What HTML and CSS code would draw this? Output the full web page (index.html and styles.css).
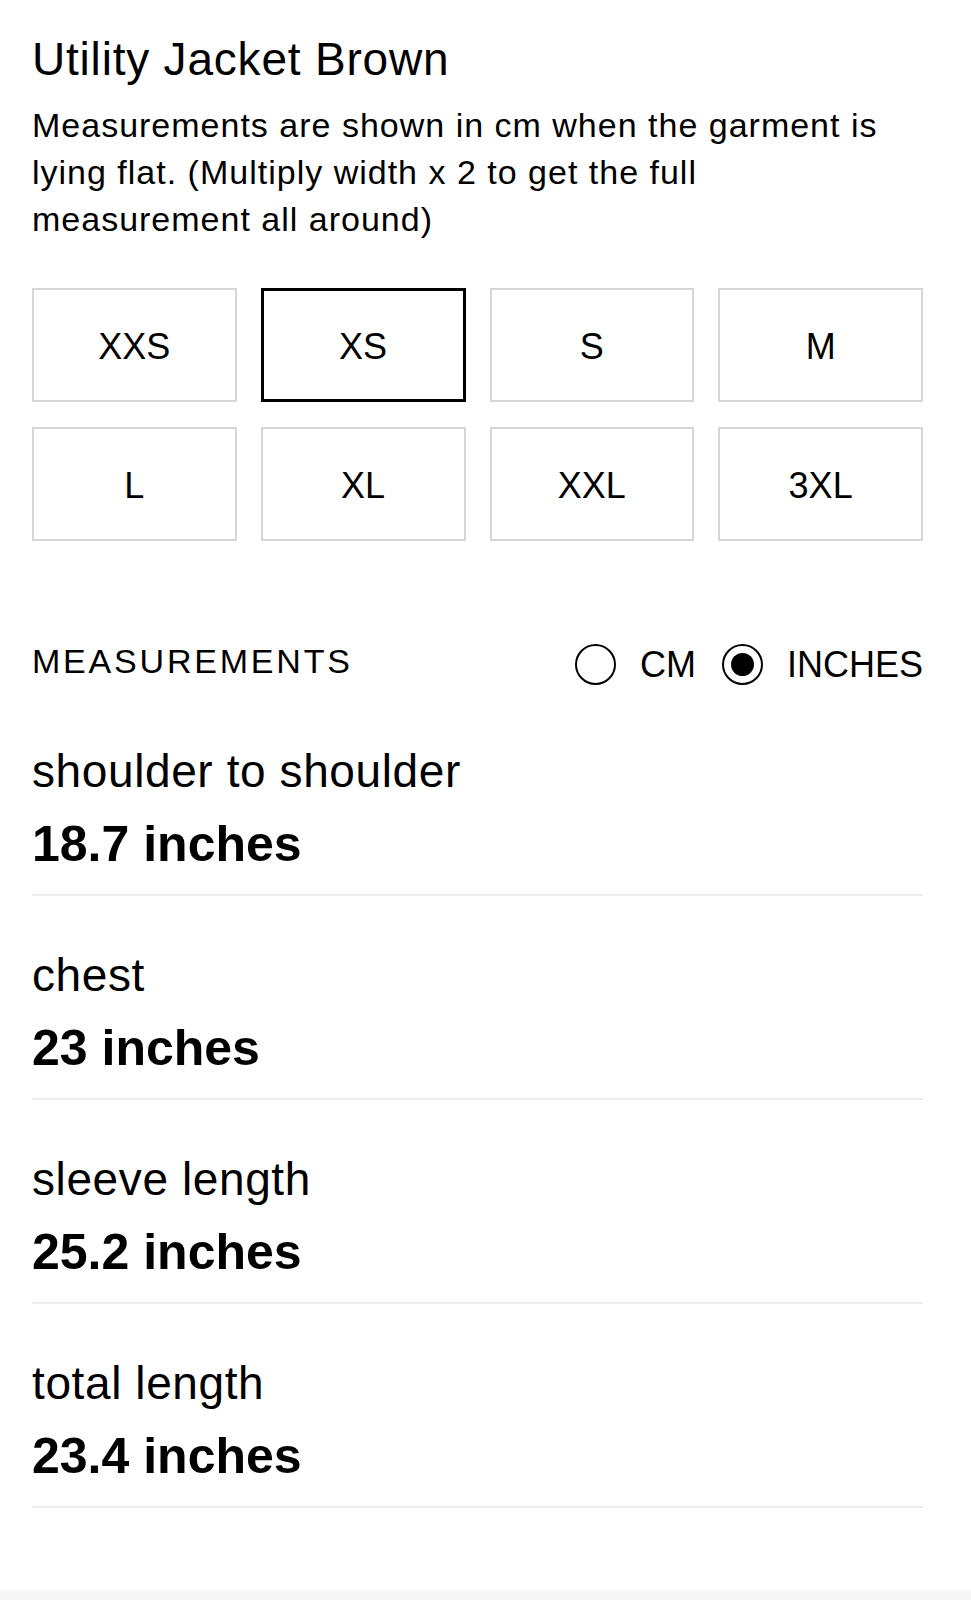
FILE: index.html
```html
<!DOCTYPE html>
<html lang="en">
<head>
    <meta charset="UTF-8">
    <meta name="viewport" content="width=device-width, initial-scale=1.0">
    <title>Size Guide - Utility Jacket Brown</title>
    <link rel="stylesheet" href="styles.css">
</head>
<body>
    <main class="size-guide">
        <h1 class="product-title">Utility Jacket Brown</h1>
        <p class="intro">
            Measurements are shown in cm when the garment is lying flat. (Multiply width x 2 to get the full measurement all around)
        </p>

        <div class="size-grid">
            <button class="size-option">XXS</button>
            <button class="size-option selected">XS</button>
            <button class="size-option">S</button>
            <button class="size-option">M</button>
            <button class="size-option">L</button>
            <button class="size-option">XL</button>
            <button class="size-option">XXL</button>
            <button class="size-option">3XL</button>
        </div>

        <div class="measure-head">
            <h2>MEASUREMENTS</h2>
            <div class="units">
                <label class="unit"><span class="radio"></span>CM</label>
                <label class="unit"><span class="radio checked"></span>INCHES</label>
            </div>
        </div>

        <ul class="measure-list">
            <li class="measure-item">
                <div class="measure-label">shoulder to shoulder</div>
                <div class="measure-value">18.7 inches</div>
            </li>
            <li class="measure-item">
                <div class="measure-label">chest</div>
                <div class="measure-value">23 inches</div>
            </li>
            <li class="measure-item">
                <div class="measure-label">sleeve length</div>
                <div class="measure-value">25.2 inches</div>
            </li>
            <li class="measure-item">
                <div class="measure-label">total length</div>
                <div class="measure-value">23.4 inches</div>
            </li>
        </ul>
    </main>
    <div class="sheet-end"></div>
</body>
</html>
```

FILE: styles.css
```css
body {
    margin: 0;
    font-family: 'Liberation Sans', Arial, sans-serif;
    background-color: #fff;
    color: #000;
}
.size-guide {
    padding: 31px 48px 0 32px;
}
.product-title {
    margin: 0;
    font-size: 46px;
    font-weight: normal;
    line-height: 56px;
    letter-spacing: 0.8px;
}
.intro {
    margin: 15px 0 0;
    max-width: 870px;
    font-size: 34px;
    line-height: 47px;
    letter-spacing: 1px;
}
.size-grid {
    display: grid;
    grid-template-columns: repeat(4, 1fr);
    column-gap: 24px;
    row-gap: 25px;
    margin-top: 45px;
}
.size-option {
    height: 114px;
    padding: 3px 0 0;
    border: 2px solid #d7d7d7;
    background: #fff;
    color: #000;
    font-family: inherit;
    font-size: 36px;
    cursor: pointer;
}
.size-option.selected {
    border: 3px solid #000;
}
.measure-head {
    display: flex;
    justify-content: space-between;
    align-items: flex-start;
    margin-top: 103px;
}
.measure-head h2 {
    margin: 0;
    font-size: 34px;
    font-weight: normal;
    line-height: 34px;
    letter-spacing: 2.8px;
}
.units {
    display: flex;
    gap: 26px;
}
.unit {
    display: flex;
    align-items: center;
    gap: 24px;
    font-size: 36px;
    line-height: 41px;
}
.radio {
    box-sizing: border-box;
    width: 41px;
    height: 41px;
    border: 2px solid #000;
    border-radius: 50%;
    padding: 7px;
}
.radio.checked::after {
    content: "";
    display: block;
    width: 100%;
    height: 100%;
    border-radius: 50%;
    background: #000;
}
.measure-list {
    list-style: none;
    margin: 7px 0 0;
    padding: 0;
}
.measure-item {
    padding: 51px 0 22px;
    border-bottom: 2px solid #eeeeee;
}
.measure-label {
    font-size: 46px;
    line-height: 56px;
    letter-spacing: 0.6px;
    margin-bottom: 17px;
}
.measure-value {
    font-size: 50px;
    font-weight: bold;
    line-height: 56px;
}
.sheet-end {
    height: 10px;
    margin-top: 82px;
    background-color: #f6f6f6;
}
```
